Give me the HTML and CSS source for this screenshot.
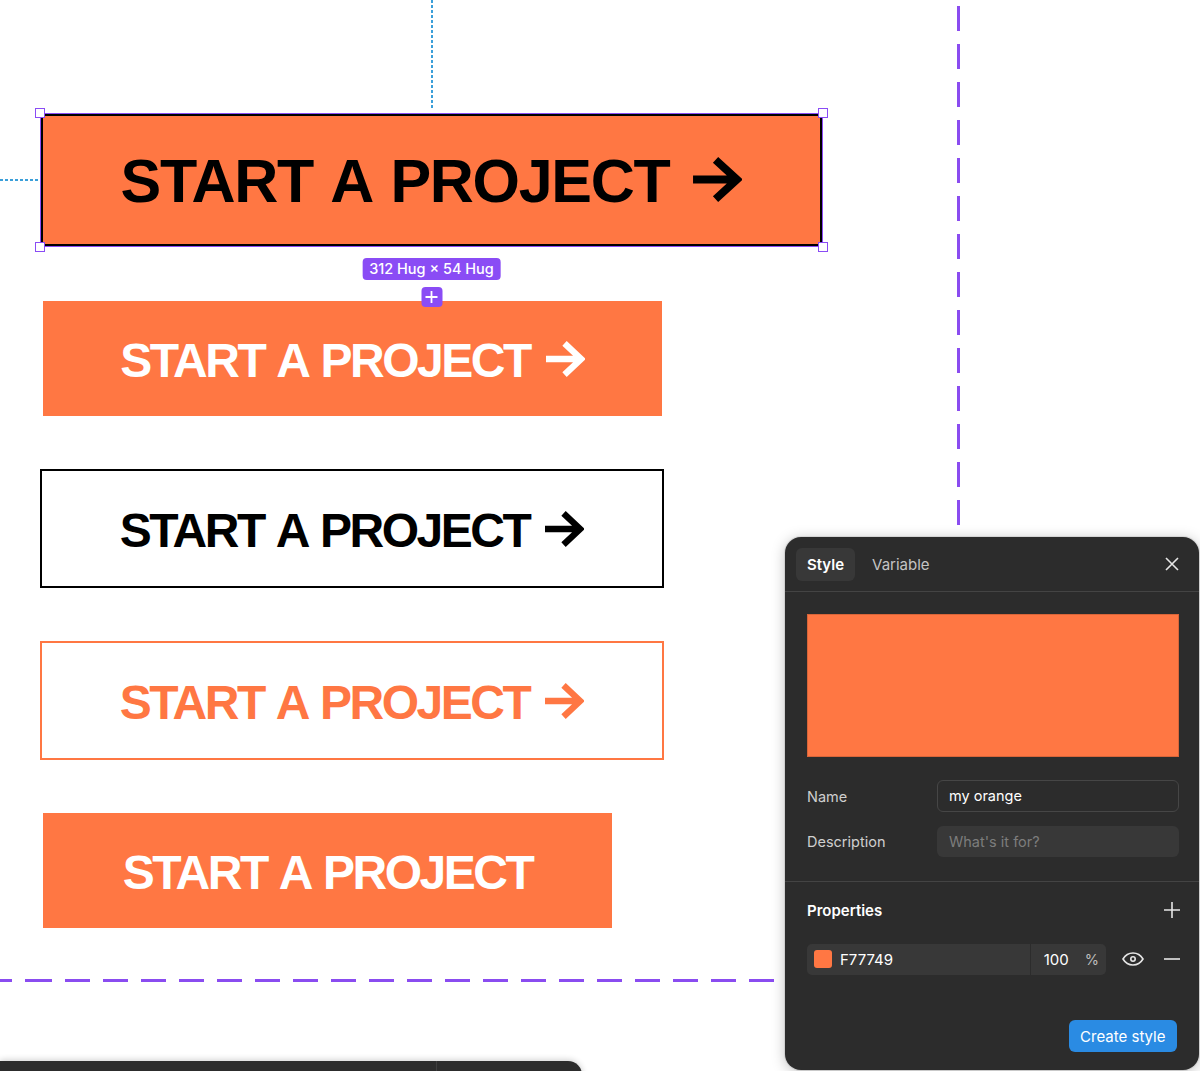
FILE: index.html
```html
<!DOCTYPE html>
<html lang="en">

<head>
	<meta charset="UTF-8">
	<meta name="viewport" content="width=device-width, initial-scale=1.0">
	<title>Start a project – button styles</title>
	<link rel="stylesheet" href="styles.css">
</head>

<body>
	<div class="canvas">
		<!-- Layout guides -->
		<div class="guide guide-blue-v"></div>
		<div class="guide guide-blue-h"></div>
		<div class="guide guide-purple-v"></div>
		<div class="guide guide-purple-h"></div>

		<div class="stack">
			<div class="btn btn-selected">
				<span class="btn-label">START A PROJECT</span>
				<svg class="arrow" viewBox="0 0 50 46" width="49" height="45">
					<path d="M0 23H44M23 3L45 23L23 43" fill="none" stroke="currentColor" stroke-width="8" stroke-linejoin="miter" />
				</svg>
				<span class="handle handle-tl"></span>
				<span class="handle handle-tr"></span>
				<span class="handle handle-bl"></span>
				<span class="handle handle-br"></span>
				<span class="size-badge">312 Hug × 54 Hug</span>
				<span class="add-btn">
					<svg viewBox="0 0 14 14" width="14" height="14">
						<path d="M7 1V13M1 7H13" stroke="#fff" stroke-width="1.8" />
					</svg>
				</span>
			</div>

			<div class="btn btn-fill">
				<span class="btn-label">START A PROJECT</span>
				<svg class="arrow" viewBox="0 0 40 36" width="39" height="36">
					<path d="M0 18H35M19 2L36 18L19 34" fill="none" stroke="currentColor" stroke-width="6.5" stroke-linejoin="miter" />
				</svg>
			</div>

			<div class="btn btn-outline-dark">
				<span class="btn-label">START A PROJECT</span>
				<svg class="arrow" viewBox="0 0 40 36" width="39" height="36">
					<path d="M0 18H35M19 2L36 18L19 34" fill="none" stroke="currentColor" stroke-width="6.5" stroke-linejoin="miter" />
				</svg>
			</div>

			<div class="btn btn-outline-orange">
				<span class="btn-label">START A PROJECT</span>
				<svg class="arrow" viewBox="0 0 40 36" width="39" height="36">
					<path d="M0 18H35M19 2L36 18L19 34" fill="none" stroke="currentColor" stroke-width="6.5" stroke-linejoin="miter" />
				</svg>
			</div>

			<div class="btn btn-fill btn-short">
				<span class="btn-label">START A PROJECT</span>
			</div>
		</div>

		<!-- Create style panel -->
		<div class="panel">
			<div class="panel-head">
				<div class="tabs">
					<span class="tab active">Style</span>
					<span class="tab">Variable</span>
				</div>
				<span class="icon-btn">
					<svg viewBox="0 0 16 16" width="16" height="16">
						<path d="M2 2L14 14M14 2L2 14" stroke="#e6e6e6" stroke-width="1.6" />
					</svg>
				</span>
			</div>

			<div class="panel-body">
				<div class="preview"></div>
				<div class="field">
					<span class="field-label">Name</span>
					<div class="input">my orange</div>
				</div>
				<div class="field">
					<span class="field-label">Description</span>
					<div class="input input-empty">What's it for?</div>
				</div>
			</div>

			<div class="panel-props">
				<div class="props-head">
					<span class="props-title">Properties</span>
					<span class="icon-btn">
						<svg viewBox="0 0 18 18" width="18" height="18">
							<path d="M9 1V17M1 9H17" stroke="#e6e6e6" stroke-width="1.6" />
						</svg>
					</span>
				</div>

				<div class="prop-row">
					<div class="fill-field">
						<span class="swatch"></span>
						<span class="hex">F77749</span>
						<span class="opacity">100</span>
						<span class="pct">%</span>
					</div>
					<span class="icon-btn eye">
						<svg viewBox="0 0 22 14" width="22" height="14">
							<path d="M1 7C3.5 2.8 7 1 11 1C15 1 18.5 2.8 21 7C18.5 11.2 15 13 11 13C7 13 3.5 11.2 1 7Z" fill="none" stroke="#e6e6e6" stroke-width="1.6" />
							<circle cx="11" cy="7" r="2.2" fill="none" stroke="#e6e6e6" stroke-width="1.6" />
						</svg>
					</span>
					<span class="icon-btn minus">
						<svg viewBox="0 0 18 18" width="18" height="18">
							<path d="M1 9H17" stroke="#e6e6e6" stroke-width="1.6" />
						</svg>
					</span>
				</div>

				<div class="actions">
					<button class="create-btn">Create style</button>
				</div>
			</div>
		</div>

		<!-- Bottom toolbar peeking in -->
		<div class="toolbar">
			<div class="toolbar-left"></div>
		</div>
	</div>
</body>

</html>
```

FILE: styles.css
```css
body {
	margin: 0;
	background-color: #ffffff;
	font-family: Inter, 'Noto Sans', sans-serif;
}

.canvas {
	position: relative;
	width: 1200px;
	height: 1071px;
	overflow: hidden;
	background-color: #ffffff;
}

/* Guides */
.guide {
	position: absolute;
}

.guide-blue-v {
	left: 431px;
	top: 0;
	width: 2px;
	height: 110px;
	background: repeating-linear-gradient(to bottom, #3b9fd9 0 3px, transparent 3px 5px);
}

.guide-blue-h {
	left: 0;
	top: 179px;
	width: 38px;
	height: 2px;
	background: repeating-linear-gradient(to right, #3b9fd9 0 3px, transparent 3px 5px);
}

.guide-purple-v {
	left: 957px;
	top: 6px;
	width: 3px;
	height: 519px;
	background: repeating-linear-gradient(to bottom, #8a4cf0 0 25px, transparent 25px 38px);
}

.guide-purple-h {
	left: 0;
	top: 979px;
	width: 800px;
	height: 3px;
	background: repeating-linear-gradient(to right, #8a4cf0 0 25px, transparent 25px 38px);
	background-position: 27px 0;
}

/* Buttons */
.stack {
	display: flex;
	flex-direction: column;
	align-items: flex-start;
	padding-top: 114px;
}

.btn {
	position: relative;
	box-sizing: border-box;
	display: flex;
	align-items: center;
	justify-content: center;
	width: 619px;
	height: 115px;
	margin-left: 43px;
	padding-top: 4px;
	background-color: #ff7743;
	color: #ffffff;
	font-family: 'Liberation Sans', Arial, sans-serif;
	font-weight: 700;
	font-size: 48px;
	letter-spacing: -2.5px;
	word-spacing: 3px;
	line-height: 1;
	white-space: nowrap;
}

.btn + .btn {
	margin-top: 53px;
}

.btn .arrow {
	display: block;
	margin-left: 16px;
	margin-top: -3px;
	flex-shrink: 0;
}

.btn-selected {
	z-index: 2;
	width: 781px;
	height: 132px;
	margin-left: 41px;
	margin-bottom: 2px;
	padding-top: 2px;
	border: 2px solid #000000;
	outline: 1px solid #8a4cf5;
	color: #000000;
	font-size: 61px;
	letter-spacing: -1.3px;
	word-spacing: 4px;
}

.btn-selected .arrow {
	margin-left: 24px;
}

.btn-outline-dark,
.btn-outline-orange {
	width: 624px;
	height: 119px;
	margin-left: 40px;
	background-color: #ffffff;
}

.btn-outline-dark {
	border: 2px solid #000000;
	color: #000000;
}

.btn-outline-orange {
	border: 2px solid #ff7743;
	color: #ff7743;
}

.btn-short {
	width: 569px;
}

/* Selection chrome */
.handle {
	position: absolute;
	box-sizing: border-box;
	width: 10px;
	height: 10px;
	background-color: #ffffff;
	border: 1.5px solid #8a4cf5;
}

.handle-tl {
	top: -8px;
	left: -8px;
}

.handle-tr {
	top: -8px;
	right: -8px;
}

.handle-bl {
	bottom: -8px;
	left: -8px;
}

.handle-br {
	bottom: -8px;
	right: -8px;
}

.size-badge {
	position: absolute;
	top: 142px;
	left: 50%;
	transform: translateX(-50%);
	padding: 0 7px;
	height: 22px;
	line-height: 22px;
	border-radius: 4px;
	background-color: #8a4cf5;
	color: #ffffff;
	font-family: Inter, sans-serif;
	font-size: 14.5px;
	font-weight: 500;
	letter-spacing: 0;
	word-spacing: 0;
}

.add-btn {
	position: absolute;
	top: 171px;
	left: 50%;
	transform: translateX(-50%);
	display: flex;
	align-items: center;
	justify-content: center;
	width: 21px;
	height: 20px;
	border-radius: 4px;
	background-color: #8a4cf5;
}

/* Panel */
.panel {
	position: absolute;
	left: 785px;
	top: 537px;
	width: 414px;
	height: 533px;
	border-radius: 16px;
	background-color: #2c2c2c;
	box-shadow: 0 2px 14px rgba(0, 0, 0, 0.25), 0 0 0 1px rgba(0, 0, 0, 0.08);
	color: #ffffff;
	font-size: 14.5px;
}

.panel-head {
	display: flex;
	align-items: center;
	justify-content: space-between;
	height: 54px;
	padding: 0 11px;
	border-bottom: 1px solid #444444;
}

.tabs {
	display: flex;
	gap: 6px;
}

.tab {
	height: 33px;
	line-height: 33px;
	padding: 0 11px;
	border-radius: 6px;
	color: #c4c4c4;
	font-size: 15px;
}

.tab.active {
	background-color: #383838;
	color: #ffffff;
	font-weight: 600;
}

.icon-btn {
	display: flex;
	align-items: center;
	justify-content: center;
	width: 32px;
	height: 32px;
	flex-shrink: 0;
}

.panel-body {
	padding: 22px 20px 24px 22px;
	border-bottom: 1px solid #444444;
}

.preview {
	height: 143px;
	background-color: #ff7743;
	box-shadow: inset 0 0 0 1px rgba(0, 0, 0, 0.15);
}

.field {
	display: flex;
	align-items: center;
	margin-top: 14px;
}

.preview + .field {
	margin-top: 23px;
}

.field-label {
	width: 130px;
	color: #cfcfcf;
}

.input {
	box-sizing: border-box;
	flex: 1;
	height: 32px;
	line-height: 30px;
	padding: 0 11px;
	border: 1px solid #464646;
	border-radius: 6px;
	color: #ffffff;
}

.input-empty {
	height: 31px;
	line-height: 31px;
	border: none;
	padding-left: 12px;
	background-color: #383838;
	color: #7d7d7d;
}

.panel-props {
	padding: 0 20px 0 22px;
}

.props-head {
	display: flex;
	align-items: center;
	justify-content: space-between;
	height: 56px;
	margin-right: -9px;
}

.props-title {
	font-size: 15px;
	font-weight: 600;
}

.prop-row {
	display: flex;
	align-items: center;
	margin-top: 5px;
}

.fill-field {
	display: flex;
	align-items: center;
	width: 299px;
	height: 31px;
	border-radius: 5px;
	background-color: #383838;
	flex-shrink: 0;
}

.swatch {
	width: 18px;
	height: 18px;
	margin-left: 7px;
	border-radius: 3px;
	background-color: #ff7743;
}

.hex {
	flex: 1;
	margin-left: 8px;
	height: 31px;
	line-height: 31px;
	border-right: 1px solid #2c2c2c;
	font-size: 15px;
}

.opacity {
	margin-left: 13px;
	font-size: 15px;
}

.pct {
	margin-left: 16px;
	margin-right: 7px;
	color: #bdbdbd;
}

.eye {
	margin-left: 11px;
}

.minus {
	margin-left: 7px;
}

.actions {
	display: flex;
	justify-content: flex-end;
	margin-top: 45px;
	margin-right: 2px;
}

.create-btn {
	height: 32px;
	padding: 0 11.5px;
	border: none;
	border-radius: 6px;
	background-color: #2a8be3;
	color: #ffffff;
	font-family: Inter, sans-serif;
	font-size: 15px;
}

/* Bottom toolbar */
.toolbar {
	position: absolute;
	left: 0;
	top: 1061px;
	width: 582px;
	height: 30px;
	border-radius: 0 14px 0 0;
	background-color: #2c2c2c;
	box-shadow: 0 -1px 6px rgba(0, 0, 0, 0.2);
}

.toolbar-left {
	width: 436px;
	height: 100%;
	border-right: 1px solid #3e3e3e;
}
```
